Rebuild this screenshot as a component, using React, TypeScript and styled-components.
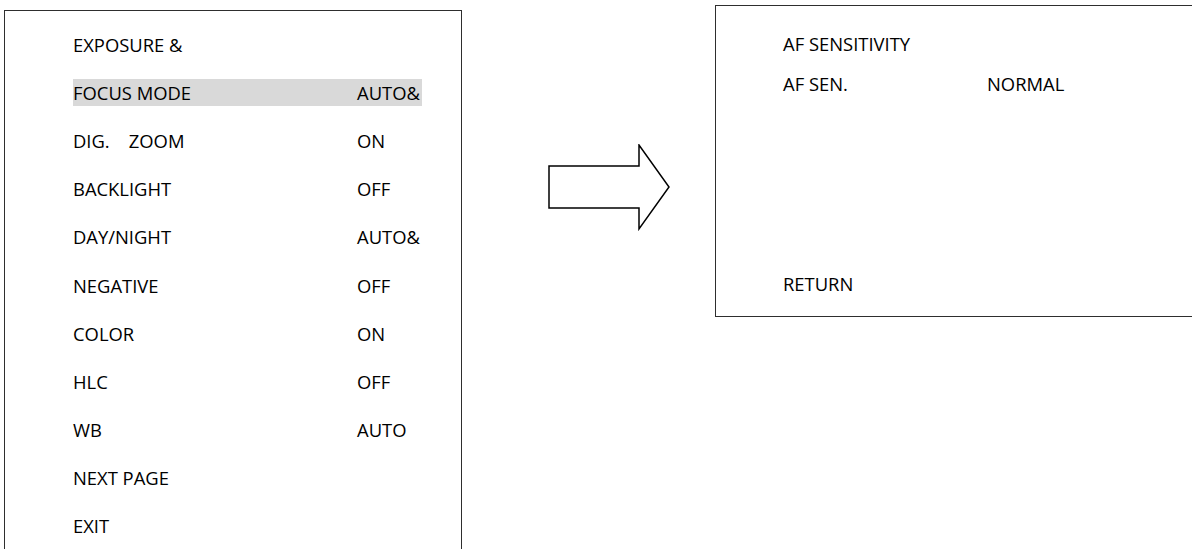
import React from "react";
import styled, { createGlobalStyle } from "styled-components";

type Item = { label: string; value?: string; active?: boolean };

const mainMenu: Item[] = [
  { label: "EXPOSURE &" },
  { label: "FOCUS MODE", value: "AUTO&", active: true },
  { label: "DIG.\u00a0\u00a0\u00a0\u00a0ZOOM", value: "ON" },
  { label: "BACKLIGHT", value: "OFF" },
  { label: "DAY/NIGHT", value: "AUTO&" },
  { label: "NEGATIVE", value: "OFF" },
  { label: "COLOR", value: "ON" },
  { label: "HLC", value: "OFF" },
  { label: "WB", value: "AUTO" },
  { label: "NEXT PAGE" },
  { label: "EXIT" },
];

// blank strings keep the empty lines of the sub menu
const afMenu: Item[] = [
  { label: "AF SENSITIVITY" },
  { label: "AF SEN.", value: "NORMAL" },
  { label: "" },
  { label: "" },
  { label: "" },
  { label: "" },
  { label: "RETURN" },
];

export default function App() {
  return (
    <>
      <GlobalStyle />
      <Page>
        <MenuBox>
          {mainMenu.map((item, i) => (
            <MainRow key={i}>
              <Entry active={item.active}>
                <MainLabel>{item.label}</MainLabel>
                {item.value && <span>{item.value}</span>}
              </Entry>
            </MainRow>
          ))}
        </MenuBox>
        <ArrowWrap>
          <svg width="124" height="88" viewBox="0 0 124 88">
            <polygon
              points="1,22 91,22 91,1 121,43 91,85 91,64 1,64"
              fill="#ffffff"
              stroke="#000000"
              strokeWidth="1.5"
              strokeLinejoin="miter"
            />
          </svg>
        </ArrowWrap>
        <SubBox>
          {afMenu.map((item, i) => (
            <SubRow key={i}>
              <SubLabel>{item.label}</SubLabel>
              {item.value && <span>{item.value}</span>}
            </SubRow>
          ))}
        </SubBox>
      </Page>
    </>
  );
}

const GlobalStyle = createGlobalStyle`
  html, body {
    margin: 0;
    padding: 0;
    background: #ffffff;
  }
  body {
    font-family: "Open Sans", "Noto Sans", sans-serif;
    font-size: 18.4px;
    color: #000000;
  }
`;

const Page = styled.div`
  display: flex;
  align-items: flex-start;
  width: 1192px;
  height: 549px;
  overflow: hidden;
`;

const MenuBox = styled.div`
  box-sizing: border-box;
  flex: none;
  width: 458px;
  height: 539px;
  margin: 10px 0 0 4px;
  padding: 9px 0 0 68px;
  border: 1px solid #2e2e2e;
  border-bottom: none;
  display: flex;
  flex-direction: column;
`;

const MainRow = styled.div`
  height: 48.2px;
  display: flex;
  align-items: center;
  flex: none;
`;

const Entry = styled.div<{ active?: boolean }>`
  display: flex;
  align-items: center;
  width: 349px;
  height: 27px;
  background: ${(p) => (p.active ? "#d9d9d9" : "transparent")};
  white-space: pre;
`;

const MainLabel = styled.span`
  width: 284px;
  flex: none;
`;

const ArrowWrap = styled.div`
  flex: none;
  margin: 144px 0 0 86px;
  line-height: 0;
`;

const SubBox = styled.div`
  box-sizing: border-box;
  flex: 1;
  height: 312px;
  margin: 5px -4px 0 43px;
  padding: 17px 0 0 67px;
  border: 1px solid #2e2e2e;
  border-right: none;
  display: flex;
  flex-direction: column;
`;

const SubRow = styled.div`
  height: 40px;
  display: flex;
  align-items: center;
  flex: none;
`;

const SubLabel = styled.span`
  width: 204px;
  flex: none;
`;
